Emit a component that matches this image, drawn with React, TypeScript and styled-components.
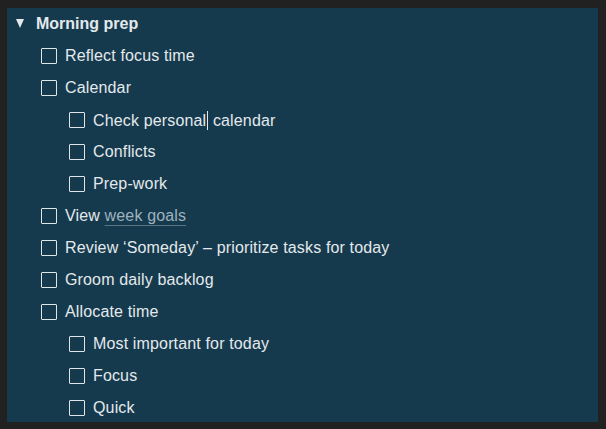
import React from "react";
import styled, { createGlobalStyle } from "styled-components";

const Global = createGlobalStyle`
  html, body { margin: 0; padding: 0; background: #202020; }
  body { width: 606px; height: 429px; overflow: hidden; }
`;

const Frame = styled.div`
  box-sizing: border-box;
  width: 606px;
  height: 429px;
  padding: 8px 8px 7px 7px;
  background: #212121;
`;

const Panel = styled.div`
  box-sizing: border-box;
  height: 100%;
  background: #163a4d;
  padding: 4px 0 0 9px;
  font-family: "Liberation Sans", "Inter", sans-serif;
  color: #e3e9ec;
  font-size: 16px;
  overflow: hidden;
`;

const Header = styled.div`
  display: flex;
  align-items: center;
  height: 24px;
  font-weight: 700;
  gap: 12px;
  margin-bottom: 8px;
`;

const Triangle = styled.span`
  width: 0;
  height: 0;
  border-left: 4.5px solid transparent;
  border-right: 4.5px solid transparent;
  border-top: 9px solid #e3e9ec;
  margin-top: -1px;
`;

const List = styled.ul`
  list-style: none;
  margin: 0;
  padding: 0 0 0 25px;
  display: flex;
  flex-direction: column;
  gap: 8px;
`;

const Item = styled.li<{ $level: number }>`
  display: flex;
  align-items: center;
  height: 24px;
  gap: 8px;
  padding-left: ${(p) => p.$level * 28}px;
  letter-spacing: 0.15px;
`;

const Box = styled.span`
  box-sizing: border-box;
  width: 16px;
  height: 16px;
  border: 1.5px solid #dfe6ea;
  border-radius: 1px;
  flex: none;
  margin-top: -1px;
`;

const Link = styled.span`
  color: #9fb3bf;
  text-decoration: underline;
  text-decoration-color: #587584;
  text-underline-offset: 4px;
`;

const Caret = styled.span`
  display: inline-block;
  width: 1px;
  height: 19px;
  background: #e3e9ec;
  vertical-align: -4px;
  margin: 0 0 0 1px;
`;

const Label = styled.span`
  white-space: pre;
`;

export default function App() {
  return (
    <>
      <Global />
      <Frame>
        <Panel>
          <Header>
            <Triangle />
            <span>Morning prep</span>
          </Header>
          <List>
            <Item $level={0}><Box /><Label>Reflect focus time</Label></Item>
            <Item $level={0}><Box /><Label>Calendar</Label></Item>
            <Item $level={1}><Box /><Label>Check personal<Caret /> calendar</Label></Item>
            <Item $level={1}><Box /><Label>Conflicts</Label></Item>
            <Item $level={1}><Box /><Label>Prep-work</Label></Item>
            <Item $level={0}><Box /><Label>View <Link>week goals</Link></Label></Item>
            <Item $level={0}><Box /><Label>Review ‘Someday’ – prioritize tasks for today</Label></Item>
            <Item $level={0}><Box /><Label>Groom daily backlog</Label></Item>
            <Item $level={0}><Box /><Label>Allocate time</Label></Item>
            <Item $level={1}><Box /><Label>Most important for today</Label></Item>
            <Item $level={1}><Box /><Label>Focus</Label></Item>
            <Item $level={1}><Box /><Label>Quick</Label></Item>
          </List>
        </Panel>
      </Frame>
    </>
  );
}
